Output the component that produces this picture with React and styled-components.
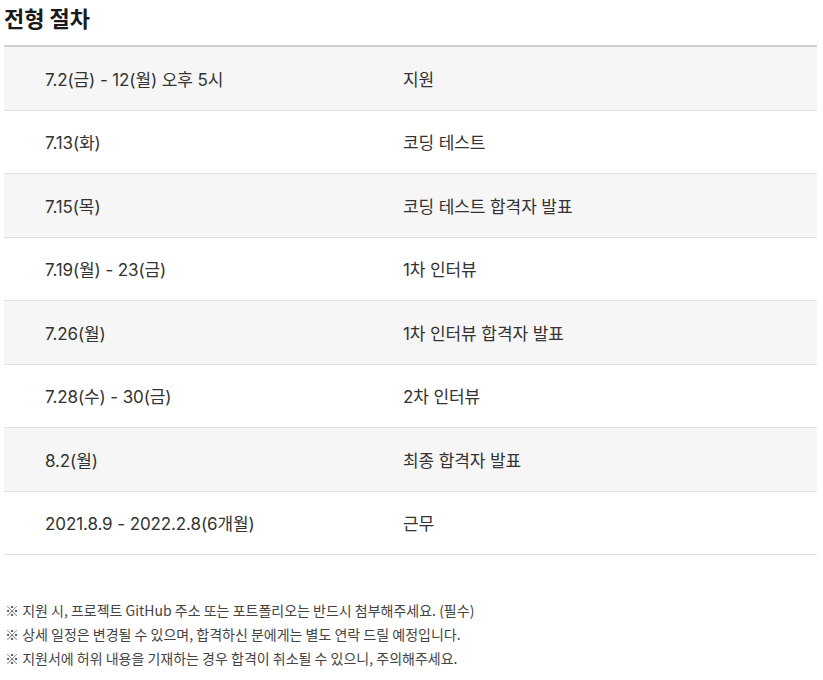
import React from "react";
import styled, { createGlobalStyle } from "styled-components";

const Global = createGlobalStyle`
  html, body { margin: 0; padding: 0; background: #fff; }
  body { font-family: Inter, "Noto Sans CJK KR", "Noto Sans", sans-serif; color: #222; }
`;

const Page = styled.div`
  padding: 4px 6px 0 4px;
`;

const Title = styled.h2`
  margin: 0;
  height: 41px;
  font-family: "Noto Sans CJK KR", sans-serif;
  font-size: 22px;
  font-weight: 700;
  line-height: 26px;
  color: #1a1a1a;
`;

const Table = styled.div`
  border-top: 2px solid #d0d0d0;
  display: flex;
  flex-direction: column;
`;

const Row = styled.div`
  display: grid;
  grid-template-columns: 399px 1fr;
  align-items: center;
  height: 62.5px;
  border-bottom: 1px solid #e0e0e0;
  background: ${(p) => (p.$shaded ? "#f6f6f6" : "#fff")};
`;

const Cell = styled.div`
  padding-left: ${(p) => (p.$first ? "41px" : "0")};
  font-family: Inter, "Noto Sans CJK KR", sans-serif;
  font-size: 17px;
  color: #333;
  letter-spacing: -0.1px;
`;

const Notes = styled.ul`
  list-style: none;
  margin: 43px 0 0 1px;
  padding: 0;
`;

const Note = styled.li`
  font-family: "Noto Sans CJK KR", sans-serif;
  font-size: 14px;
  line-height: 24px;
  color: #444;
  letter-spacing: 0;
`;

const rows = [
  ["7.2(금) - 12(월) 오후 5시", "지원"],
  ["7.13(화)", "코딩 테스트"],
  ["7.15(목)", "코딩 테스트 합격자 발표"],
  ["7.19(월) - 23(금)", "1차 인터뷰"],
  ["7.26(월)", "1차 인터뷰 합격자 발표"],
  ["7.28(수) - 30(금)", "2차 인터뷰"],
  ["8.2(월)", "최종 합격자 발표"],
  ["2021.8.9 - 2022.2.8(6개월)", "근무"],
];

const notes = [
  "※ 지원 시, 프로젝트 GitHub 주소 또는 포트폴리오는 반드시 첨부해주세요. (필수)",
  "※ 상세 일정은 변경될 수 있으며, 합격하신 분에게는 별도 연락 드릴 예정입니다.",
  "※ 지원서에 허위 내용을 기재하는 경우 합격이 취소될 수 있으니, 주의해주세요.",
];

export default function App() {
  return (
    <Page>
      <Global />
      <Title>전형 절차</Title>
      <Table>
        {rows.map(([d, s], i) => (
          <Row key={i} $shaded={i % 2 === 0}>
            <Cell $first>{d}</Cell>
            <Cell>{s}</Cell>
          </Row>
        ))}
      </Table>
      <Notes>
        {notes.map((n, i) => (
          <Note key={i}>{n}</Note>
        ))}
      </Notes>
    </Page>
  );
}
